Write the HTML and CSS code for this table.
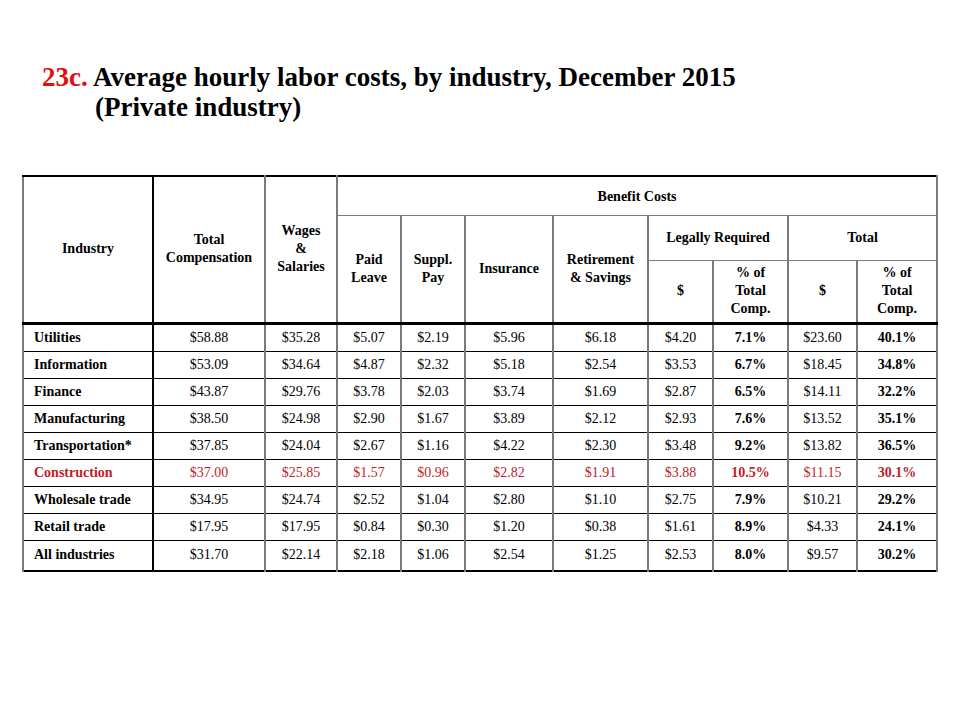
FILE: index.html
```html
<!DOCTYPE html>
<html lang="en">
<head>
<meta charset="utf-8">
<title>23c. Average hourly labor costs</title>
<link rel="stylesheet" href="styles.css">
</head>
<body>
<div class="slide">
  <h1 class="title">
    <span class="line1"><span class="num">23c.</span> Average hourly labor costs, by industry, December 2015</span>
    <span class="line2">(Private industry)</span>
  </h1>
  <table class="data">
    <colgroup>
      <col class="c-ind"><col class="c-tc"><col class="c-ws"><col class="c-pl"><col class="c-sp"><col class="c-ins"><col class="c-ret"><col class="c-lr1"><col class="c-lr2"><col class="c-t1"><col class="c-t2">
    </colgroup>
    <thead>
      <tr class="h1">
        <th rowspan="3" class="ind-h">Industry</th>
        <th rowspan="3">Total<br>Compensation</th>
        <th rowspan="3">Wages<br>&amp;<br>Salaries</th>
        <th colspan="8" class="bc">Benefit Costs</th>
      </tr>
      <tr class="h2">
        <th rowspan="2">Paid<br>Leave</th>
        <th rowspan="2">Suppl.<br>Pay</th>
        <th rowspan="2">Insurance</th>
        <th rowspan="2">Retirement<br>&amp; Savings</th>
        <th colspan="2">Legally Required</th>
        <th colspan="2">Total</th>
      </tr>
      <tr class="h3">
        <th>$</th>
        <th>% of<br>Total<br>Comp.</th>
        <th>$</th>
        <th>% of<br>Total<br>Comp.</th>
      </tr>
    </thead>
    <tbody>
      <tr><td class="ind">Utilities</td><td>$58.88</td><td>$35.28</td><td>$5.07</td><td>$2.19</td><td>$5.96</td><td>$6.18</td><td>$4.20</td><td class="pct">7.1%</td><td>$23.60</td><td class="pct">40.1%</td></tr>
      <tr><td class="ind">Information</td><td>$53.09</td><td>$34.64</td><td>$4.87</td><td>$2.32</td><td>$5.18</td><td>$2.54</td><td>$3.53</td><td class="pct">6.7%</td><td>$18.45</td><td class="pct">34.8%</td></tr>
      <tr><td class="ind">Finance</td><td>$43.87</td><td>$29.76</td><td>$3.78</td><td>$2.03</td><td>$3.74</td><td>$1.69</td><td>$2.87</td><td class="pct">6.5%</td><td>$14.11</td><td class="pct">32.2%</td></tr>
      <tr><td class="ind">Manufacturing</td><td>$38.50</td><td>$24.98</td><td>$2.90</td><td>$1.67</td><td>$3.89</td><td>$2.12</td><td>$2.93</td><td class="pct">7.6%</td><td>$13.52</td><td class="pct">35.1%</td></tr>
      <tr><td class="ind">Transportation*</td><td>$37.85</td><td>$24.04</td><td>$2.67</td><td>$1.16</td><td>$4.22</td><td>$2.30</td><td>$3.48</td><td class="pct">9.2%</td><td>$13.82</td><td class="pct">36.5%</td></tr>
      <tr class="hl"><td class="ind">Construction</td><td>$37.00</td><td>$25.85</td><td>$1.57</td><td>$0.96</td><td>$2.82</td><td>$1.91</td><td>$3.88</td><td class="pct">10.5%</td><td>$11.15</td><td class="pct">30.1%</td></tr>
      <tr><td class="ind">Wholesale trade</td><td>$34.95</td><td>$24.74</td><td>$2.52</td><td>$1.04</td><td>$2.80</td><td>$1.10</td><td>$2.75</td><td class="pct">7.9%</td><td>$10.21</td><td class="pct">29.2%</td></tr>
      <tr><td class="ind">Retail trade</td><td>$17.95</td><td>$17.95</td><td>$0.84</td><td>$0.30</td><td>$1.20</td><td>$0.38</td><td>$1.61</td><td class="pct">8.9%</td><td>$4.33</td><td class="pct">24.1%</td></tr>
      <tr class="last"><td class="ind">All industries</td><td>$31.70</td><td>$22.14</td><td>$2.18</td><td>$1.06</td><td>$2.54</td><td>$1.25</td><td>$2.53</td><td class="pct">8.0%</td><td>$9.57</td><td class="pct">30.2%</td></tr>
    </tbody>
  </table>
</div>
</body>
</html>
```

FILE: styles.css
```css
html, body {
  margin: 0;
  padding: 0;
  background: #ffffff;
}

body {
  font-family: "Liberation Serif", "Times New Roman", serif;
  color: #000000;
  width: 960px;
  height: 720px;
  overflow: hidden;
}

.slide {
  padding: 62px 0 0 22px;
}

.title {
  margin: 0 0 0 20px;
  font-size: 27px;
  font-weight: bold;
  line-height: 30px;
}

.title .line1,
.title .line2 {
  display: block;
}

.title .line2 {
  padding-left: 53px;
}

.title .num {
  color: #e00e0e;
}

.data {
  margin-top: 53px;
  border-collapse: collapse;
  table-layout: fixed;
  width: 915px;
  border: 2px solid #000000;
  font-size: 14px;
}

.c-ind { width: 130px; }
.c-tc { width: 112px; }
.c-ws { width: 72px; }
.c-pl { width: 64px; }
.c-sp { width: 64px; }
.c-ins { width: 88px; }
.c-ret { width: 95px; }
.c-lr1 { width: 65px; }
.c-lr2 { width: 75px; }
.c-t1 { width: 69px; }
.c-t2 { width: 80px; }

.data th {
  font-weight: bold;
  font-size: 14px;
  line-height: 18px;
  text-align: center;
  vertical-align: middle;
  padding: 0;
  border-left: 2px solid #7a7a7a;
  border-right: 2px solid #7a7a7a;
  border-top: 1px solid #7a7a7a;
  border-bottom: 1px solid #7a7a7a;
}

.data thead tr.h1 { height: 39px; }
.data thead tr.h2 { height: 45px; }
.data thead tr.h3 { height: 63px; }

.data thead tr.h1 th { border-top: 2px solid #000000; }
.data thead th.bc { padding-top: 3px; }

.data thead th[rowspan="3"],
.data thead tr.h2 th[rowspan="2"],
.data thead tr.h3 th {
  border-bottom: 3px solid #000000;
}

.data .ind-h,
.data .ind {
  border-right: 2px solid #000000;
}

.data td {
  height: 26px;
  padding: 0;
  text-align: center;
  vertical-align: middle;
  line-height: 18px;
  border-left: 2px solid #7a7a7a;
  border-right: 2px solid #7a7a7a;
  border-top: 1px solid #000000;
  border-bottom: 1px solid #000000;
}

.data tbody tr:first-child td {
  border-top: 3px solid #000000;
}

.data tr.last td {
  height: 29px;
}

.data td.ind {
  text-align: left;
  padding-left: 10px;
  font-weight: bold;
  font-size: 14px;
}

.data td.pct {
  font-weight: bold;
}

.data tr.hl td {
  color: #c01c28;
}
```
